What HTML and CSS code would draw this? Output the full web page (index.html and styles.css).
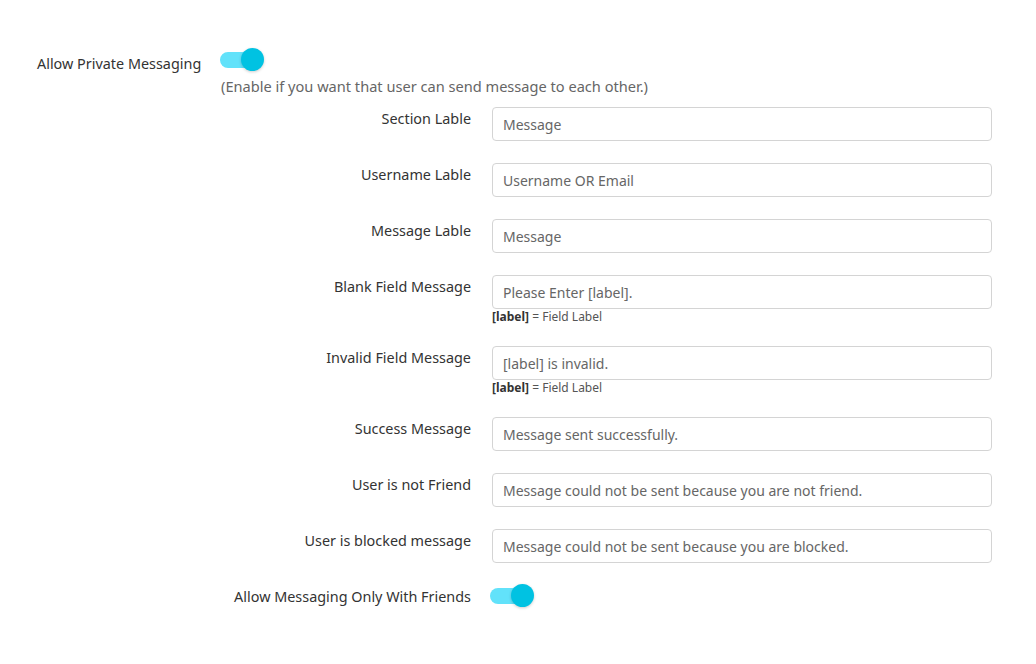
FILE: index.html
```html
<!DOCTYPE html>
<html lang="en">
<head>
    <meta charset="UTF-8">
    <meta name="viewport" content="width=device-width, initial-scale=1.0">
    <title>Messaging Settings</title>
    <link rel="stylesheet" href="styles.css">
</head>
<body>
    <div class="settings">
        <div class="main-option">
            <label class="main-label">Allow Private Messaging</label>
            <span class="switch"><span class="knob"></span></span>
        </div>
        <p class="description">(Enable if you want that user can send message to each other.)</p>

        <div class="form">
            <div class="row">
                <label>Section Lable</label>
                <div class="field"><input type="text" value="Message"></div>
            </div>
            <div class="row">
                <label>Username Lable</label>
                <div class="field"><input type="text" value="Username OR Email"></div>
            </div>
            <div class="row">
                <label>Message Lable</label>
                <div class="field"><input type="text" value="Message"></div>
            </div>
            <div class="row">
                <label>Blank Field Message</label>
                <div class="field">
                    <input type="text" value="Please Enter [label].">
                    <small class="hint"><b>[label]</b> = Field Label</small>
                </div>
            </div>
            <div class="row">
                <label>Invalid Field Message</label>
                <div class="field">
                    <input type="text" value="[label] is invalid.">
                    <small class="hint"><b>[label]</b> = Field Label</small>
                </div>
            </div>
            <div class="row">
                <label>Success Message</label>
                <div class="field"><input type="text" value="Message sent successfully."></div>
            </div>
            <div class="row">
                <label>User is not Friend</label>
                <div class="field"><input type="text" value="Message could not be sent because you are not friend."></div>
            </div>
            <div class="row">
                <label>User is blocked message</label>
                <div class="field"><input type="text" value="Message could not be sent because you are blocked."></div>
            </div>
            <div class="row toggle-row">
                <label>Allow Messaging Only With Friends</label>
                <div class="field"><span class="switch"><span class="knob"></span></span></div>
            </div>
        </div>
    </div>
</body>
</html>
```

FILE: styles.css
```css
body {
    margin: 0;
    padding: 0;
    background-color: #fff;
    font-family: 'Noto Sans', 'Open Sans', sans-serif;
    font-size: 14.4px;
    line-height: 20px;
    color: #333;
}
.settings {
    padding: 48px 0 0 37px;
}
.main-option {
    display: flex;
    align-items: flex-start;
}
.main-label {
    width: 183px;
    padding-top: 6px;
}
.switch {
    position: relative;
    display: inline-block;
    width: 44px;
    height: 24px;
}
.switch::before {
    content: "";
    position: absolute;
    left: 0;
    top: 4px;
    width: 38px;
    height: 16px;
    border-radius: 8px;
    background-color: #62e2fa;
}
.knob {
    position: absolute;
    right: 0;
    top: 0;
    width: 23px;
    height: 23px;
    border-radius: 50%;
    background-color: #00c2e2;
    box-shadow: 0 1px 3px rgba(0, 0, 0, 0.2);
}
.description {
    margin: 2px 0 0 184px;
    font-size: 14.6px;
    color: #666;
}
.form {
    margin-top: 11px;
}
.row {
    display: grid;
    grid-template-columns: 434px 500px;
    column-gap: 21px;
    margin-bottom: 22px;
}
.row label {
    text-align: right;
    padding-top: 2px;
}
.field input {
    display: block;
    box-sizing: border-box;
    width: 100%;
    height: 34px;
    padding: 0 10px;
    border: 1px solid #d4d4d4;
    border-radius: 4px;
    font-family: inherit;
    font-size: 14px;
    color: #666;
    background: #fff;
}
.hint {
    display: block;
    font-size: 12px;
    line-height: 15px;
    color: #555;
}
.hint b {
    color: #333;
}
.toggle-row .switch {
    margin-left: -2px;
    margin-top: -1px;
}
```
